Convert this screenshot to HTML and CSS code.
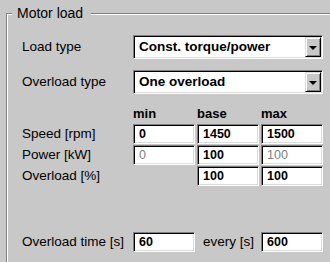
FILE: index.html
```html
<!DOCTYPE html>
<html>
<head>
<meta charset="utf-8">
<link rel="stylesheet" href="styles.css">
</head>
<body>
<div class="group">
  <span class="legend">Motor load</span>
  <div class="grid selects">
    <span class="label">Load type</span>
    <div class="select"><span class="sel-text">Const. torque/power</span><span class="sel-btn"><span class="tri"></span></span></div>
    <span class="label">Overload type</span>
    <div class="select"><span class="sel-text">One overload</span><span class="sel-btn"><span class="tri"></span></span></div>
  </div>
  <div class="grid table">
    <span></span>
    <span class="head">min</span>
    <span class="head">base</span>
    <span class="head">max</span>
    <span class="label">Speed [rpm]</span>
    <span class="field">0</span>
    <span class="field">1450</span>
    <span class="field">1500</span>
    <span class="label">Power [kW]</span>
    <span class="field disabled">0</span>
    <span class="field">100</span>
    <span class="field disabled">100</span>
    <span class="label">Overload [%]</span>
    <span></span>
    <span class="field">100</span>
    <span class="field">100</span>
  </div>
  <div class="grid bottom">
    <span class="label">Overload time [s]</span>
    <span class="field">60</span>
    <span class="label right">every [s]</span>
    <span class="field">600</span>
  </div>
</div>
</body>
</html>
```
FILE: styles.css
```css
html, body {
  margin: 0;
  padding: 0;
  background: #c8c8c8;
  overflow: hidden;
  width: 330px;
  height: 262px;
}
body {
  font-family: "Liberation Sans", Arial, sans-serif;
  color: #000;
}
.group {
  position: relative;
  margin: 13px 0 0 6px;
  width: 324px;
  height: 249px;
  border-top: 1px solid #808080;
  border-left: 1px solid #808080;
  box-shadow: inset 1px 1px 0 #fff;
  padding: 0 0 0 15px;
  box-sizing: border-box;
}
.legend {
  position: absolute;
  top: -9px;
  left: 5px;
  padding: 0 8px 0 5px;
  background: #c8c8c8;
  font-size: 14px;
  line-height: 16px;
}
.grid {
  display: grid;
  grid-template-columns: 109px 62px 62px 62px;
  column-gap: 2px;
  align-items: center;
}
.label {
  font-size: 13.5px;
  line-height: 16px;
  white-space: nowrap;
}
.label.right {
  text-align: right;
  padding-right: 5px;
}
.selects {
  margin-top: 21px;
  row-gap: 11px;
}
.select {
  grid-column: span 3;
  height: 24px;
  box-sizing: border-box;
  display: flex;
  align-items: stretch;
  background: #fff;
  border: 1px solid;
  border-color: #808080 #fff #fff #808080;
  box-shadow: inset 1px 1px 0 #000, inset -1px -1px 0 #dcdcdc;
  padding: 1px;
}
.sel-text {
  flex: 1;
  font-size: 13.5px;
  font-weight: bold;
  line-height: 20px;
  padding-left: 4px;
  white-space: nowrap;
}
.sel-btn {
  width: 16px;
  box-sizing: border-box;
  background: #c8c8c8;
  border: 1px solid;
  border-color: #dcdcdc #000 #000 #dcdcdc;
  box-shadow: inset 1px 1px 0 #fff, inset -1px -1px 0 #808080;
  display: flex;
  align-items: center;
  justify-content: center;
}
.tri {
  width: 0;
  height: 0;
  border-left: 4px solid transparent;
  border-right: 4px solid transparent;
  border-top: 4px solid #000;
  margin-top: 1px;
}
.table {
  margin-top: 12px;
  row-gap: 1px;
}
.head {
  font-size: 13px;
  font-weight: bold;
  line-height: 15px;
  margin-bottom: 2px;
}
.field {
  height: 20px;
  box-sizing: border-box;
  background: #fff;
  border: 1px solid;
  border-color: #808080 #fff #fff #808080;
  box-shadow: inset 1px 1px 0 #000, inset -1px -1px 0 #dcdcdc;
  font-size: 12.5px;
  font-weight: bold;
  line-height: 18px;
  padding-left: 5px;
}
.field.disabled {
  color: #808080;
  font-weight: normal;
}
.bottom {
  margin-top: 46px;
}
```
